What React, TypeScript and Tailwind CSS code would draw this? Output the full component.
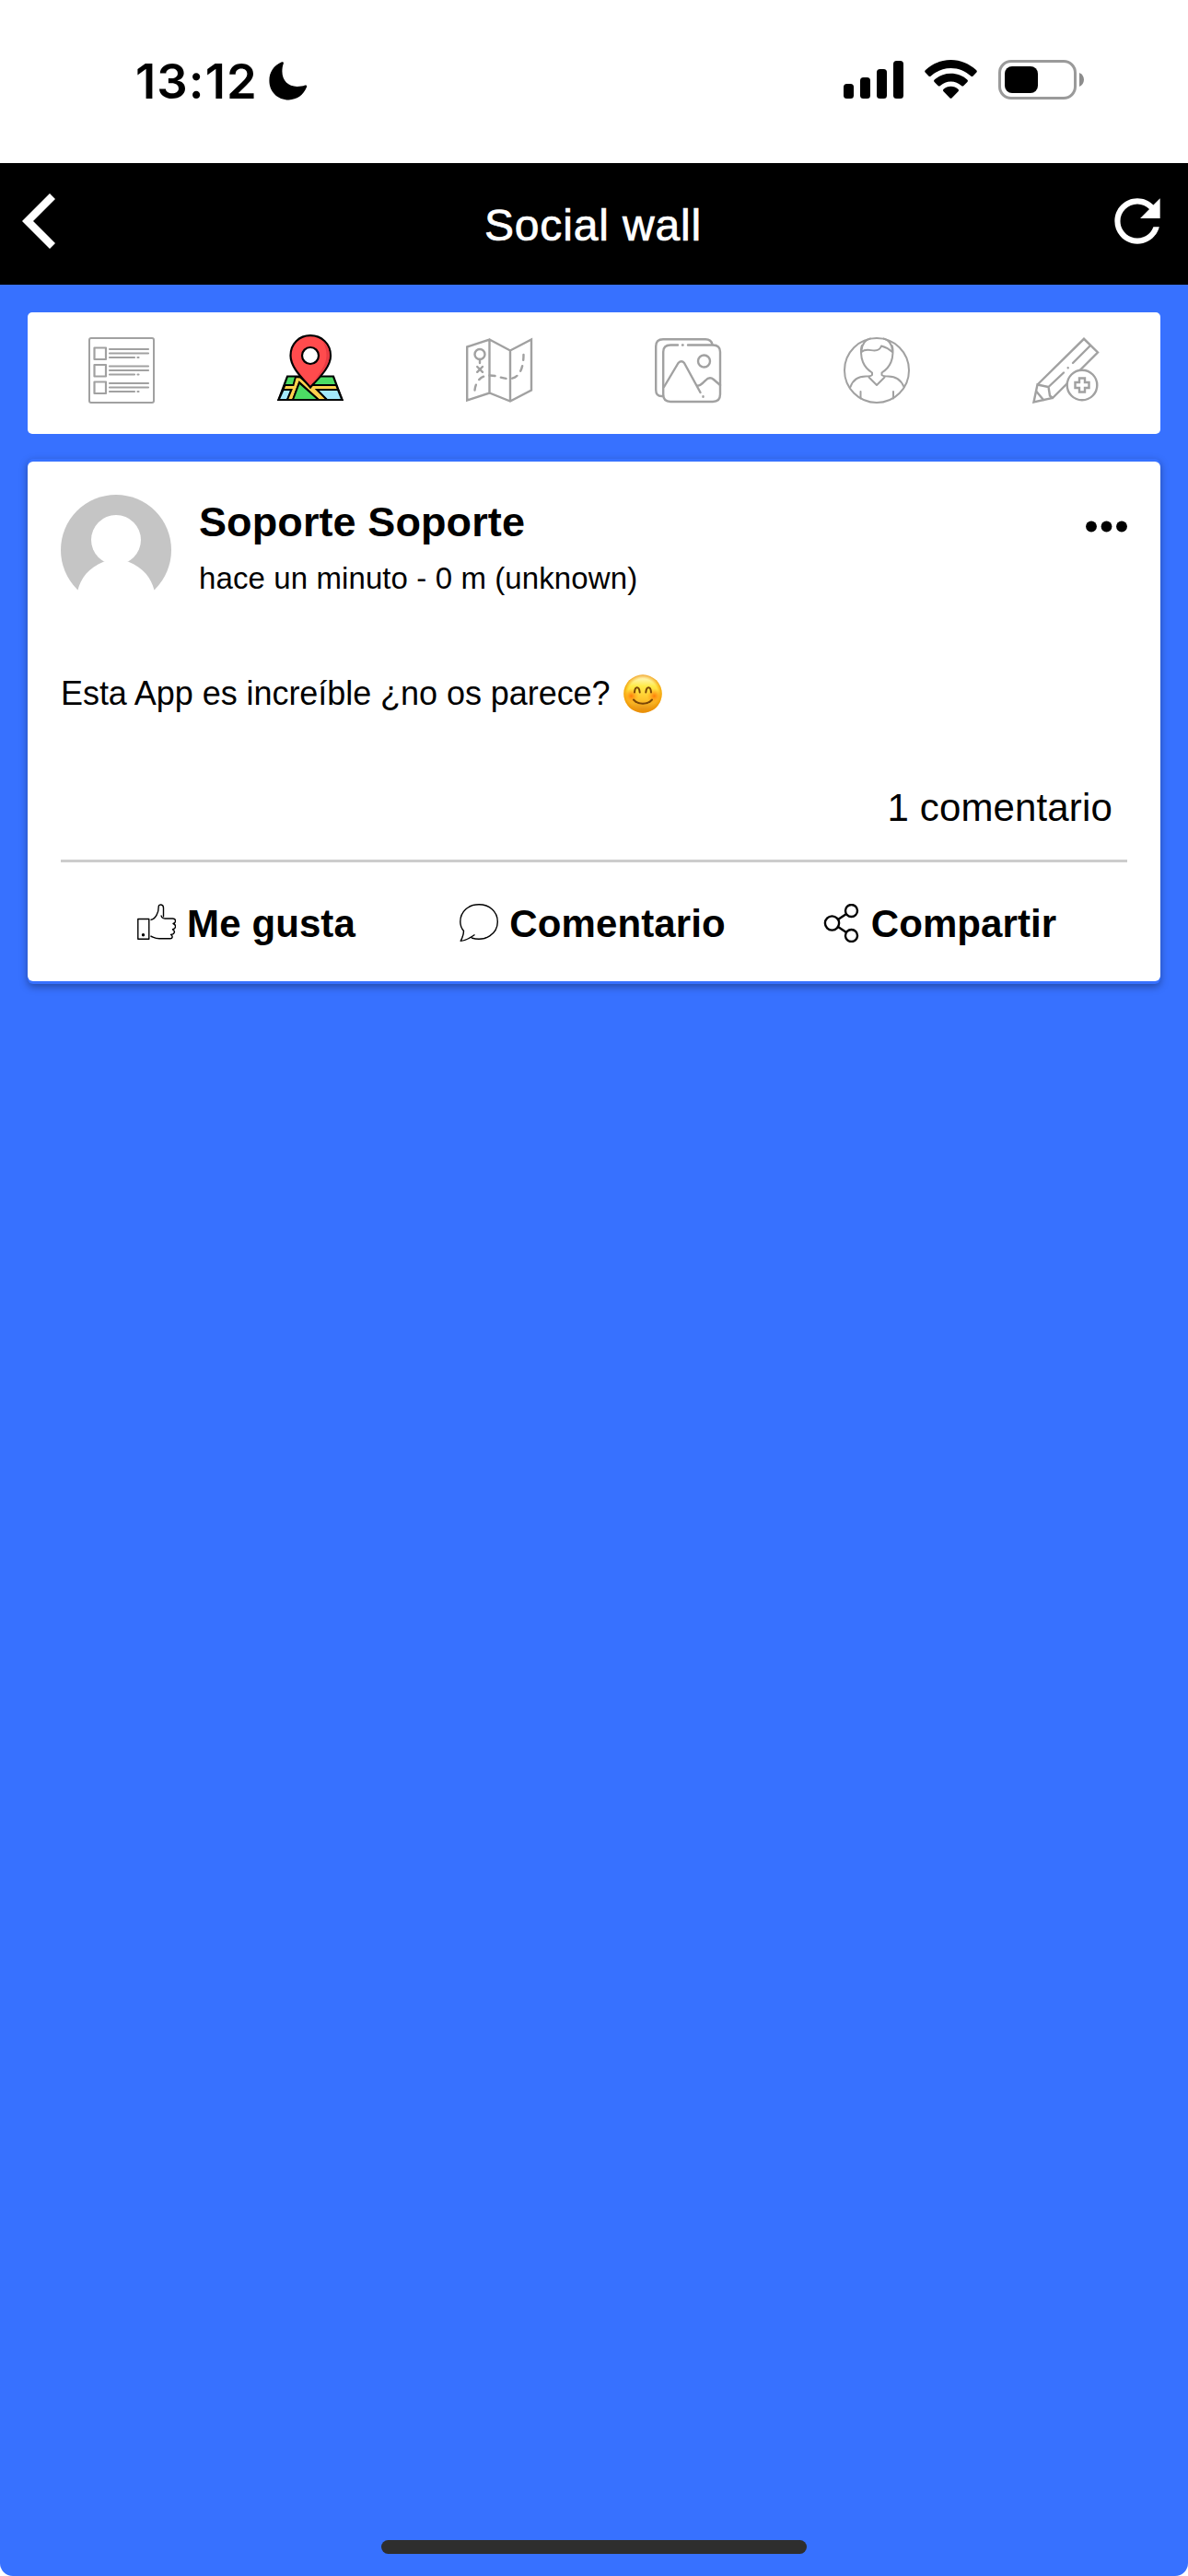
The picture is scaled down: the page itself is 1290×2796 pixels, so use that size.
import type { ReactNode } from "react";

const posts = [
  {
    author: "Soporte Soporte",
    meta: "hace un minuto - 0 m (unknown)",
    text: "Esta App es increíble ¿no os parece?",
    comments: "1 comentario",
  },
];

function StatusBar() {
  return (
    <div className="flex h-[177px] items-start justify-between bg-white pl-[147px] pr-[113px] pt-[56px]">
      <div className="flex items-center">
        <span className="w-[145px] whitespace-nowrap font-['Inter'] text-[52.5px] font-semibold leading-[64px] tracking-[1.1px]">
          13:12
        </span>
        <svg className="h-[42px] w-[42px]" viewBox="0 0 42 42">
          <path
            d="M13.5 .6C14.8 0 16.4.5 15.8 2C14.8 4.6 14.4 7.4 14.4 10.6C14.4 20.5 21 27 30.6 27C34 27 36.8 26.6 39.2 25.6C41 25 41.7 26 41 27.6C37.6 36.2 30.2 41.4 21.6 41.4C9.4 41.4 .4 32.6 .4 20.4C.4 11.4 5.6 3.8 13.5 .6Z"
            fill="#000"
          />
        </svg>
      </div>
      <div className="flex pt-[9px]">
        <svg className="h-[43px] w-[66px]" viewBox="0 0 66 43">
          <rect x="0" y="26" width="11" height="16" rx="3.5" />
          <rect x="18" y="19" width="11" height="23" rx="3.5" />
          <rect x="36" y="10" width="11" height="32" rx="3.5" />
          <rect x="54" y="1" width="11" height="41" rx="3.5" />
        </svg>
        <svg className="ml-[22px] h-[43px] w-[57px]" viewBox="0 0 57 43">
          <path d="M28.5 0C39 0 48.5 4.2 56 11Q57.4 12.4 56.4 13.6L52.6 17.6Q51.4 18.6 50.2 17.6C44.4 12.2 37 9 28.5 9S12.6 12.2 6.8 17.6Q5.6 18.6 4.4 17.6L.6 13.6Q-.4 12.4 1 11C8.5 4.2 18 0 28.5 0Z" />
          <path d="M28.5 14.8C35.2 14.8 41.5 17.2 46.3 21.5Q47.6 22.8 46.4 24.1L42.4 28Q41.2 29 40 28C37 25.3 32.9 23.5 28.5 23.5S20 25.3 17 28Q15.8 29 14.6 28L10.6 24.1Q9.4 22.8 10.7 21.5C15.5 17.2 21.8 14.8 28.5 14.8Z" />
          <path d="M28.5 28.8C31.5 28.8 34.3 29.9 36.4 31.7Q37.8 33 36.5 34.3L29.7 41.2Q28.5 42.4 27.3 41.2L20.5 34.3Q19.2 33 20.6 31.7C22.7 29.9 25.5 28.8 28.5 28.8Z" />
        </svg>
        <svg className="ml-[23px] h-[43px] w-[93px]" viewBox="0 0 93 43">
          <rect x="1.5" y="1.5" width="82" height="40" rx="12.5" fill="none" stroke="#9a9a9a" strokeWidth="3" />
          <rect x="7" y="7" width="36" height="29" rx="8" />
          <path d="M88 14C91.2 15.4 93 18.2 93 21.5S91.2 27.6 88 29Z" fill="#8c8c8c" />
        </svg>
      </div>
    </div>
  );
}

function Header() {
  return (
    <header className="flex h-[132px] items-center justify-between bg-black text-white">
      <button className="flex w-[120px] pb-[6px] pl-[24px]">
        <svg className="h-[60px] w-[36px]" viewBox="0 0 36 60">
          <path d="M33 3L6 30L33 57" fill="none" stroke="#fff" strokeWidth="8.5" />
        </svg>
      </button>
      <h1 className="pr-[2px] pt-[4px] text-[48px] leading-[60px] tracking-[0.85px] [-webkit-text-stroke:0.7px_#fff]">
        Social wall
      </h1>
      <button className="flex w-[120px] justify-end pb-[6px] pr-[18px]">
        <svg className="h-[74px] w-[74px]" viewBox="0 0 24 24" fill="#fff">
          <path d="M17.65 6.35C16.2 4.9 14.21 4 12 4c-4.42 0-7.99 3.58-7.99 8s3.57 8 7.99 8c3.73 0 6.84-2.55 7.73-6h-2.08c-.82 2.33-3.04 4-5.65 4-3.31 0-6-2.69-6-6s2.69-6 6-6c1.66 0 3.14.69 4.22 1.78L13 11h7V4l-2.35 2.35z" />
        </svg>
      </button>
    </header>
  );
}

function TabIcon({ children }: { children: ReactNode }) {
  return (
    <button className="flex flex-1 justify-center pr-[2px] pt-[27px]">
      <svg
        className="h-[72px] w-[72px] overflow-visible"
        viewBox="0 0 72 72"
        fill="none"
        stroke="#a1a1a1"
        strokeWidth="2.4"
        strokeLinecap="round"
        strokeLinejoin="round"
      >
        {children}
      </svg>
    </button>
  );
}

function Toolbar() {
  return (
    <nav className="flex h-[132px] rounded-[5px] bg-white">
      <TabIcon>
        <rect x="1" y="1" width="70" height="70" rx="2" strokeWidth="2" />
        {[0, 18.5, 37].map((y) => (
          <g key={y} strokeWidth="2.2">
            <rect x="6.5" y={11.5 + y} width="12.5" height="12.5" />
            <path d={`M23 ${13 + y}H65M23 ${17.5 + y}H65M23 ${22 + y}H50M53.5 ${22 + y}H54.5`} />
          </g>
        ))}
      </TabIcon>

      <TabIcon>
        <g transform="translate(0 -3)" stroke="#000" strokeWidth="2.2" strokeLinejoin="miter">
          <path d="M11 45.5H61L70.5 71H1.5Z" fill="#4cdc64" />
          <path d="M6.5 60H15.5L11 71H1.5Z" fill="#a4e9fc" />
          <path d="M43 60H66L70.5 71H54Z" fill="#a4e9fc" />
          <path
            d="M20 46L25 46.5L36 56L38 55H64L66 60H43L54 71H45L24 52L17 71H11L15.5 60H6.5L8.5 55H17.5Z"
            fill="#ffd24d"
            strokeWidth="1.9"
          />
          <path d="M24 52.5L17 71H45Z" fill="#4cdc64" strokeWidth="1.9" />
          <path
            d="M36 57.5C28 48 14.5 36 14.5 23C14.5 10 24 1.2 36 1.2S58 10 58 23C58 36 44 48 36 57.5Z"
            fill="#ff4b4d"
          />
          <path
            d="M48 6C53.5 9.5 56.8 15.5 56.8 23C56.8 34 46.5 44.5 38.5 53.5C44 44 53.5 34 53.5 23C53.5 16 51.5 10 48 6Z"
            fill="#e93b43"
            stroke="none"
          />
          <circle cx="36" cy="23" r="9" fill="#fff" />
        </g>
      </TabIcon>

      <TabIcon>
        <path
          d="M1.2 10.5L25.5 2.5L48 14.5L71 2.5V57.5L48 69.5L25.5 60.5L1.2 68.5ZM25.5 2.5V60.5M48 14.5V69.5"
          strokeLinejoin="miter"
        />
        <circle cx="15" cy="18.5" r="5.5" />
        <path d="M15 24V28M12.2 32L18 37.8M18 32L12.2 37.8" />
        <path
          d="M9.5 57.5C10.5 49 15 41.5 26 41.5C35 41.5 39 45.5 48 45C57 44.5 62.5 35 62.5 19"
          strokeDasharray="6 6.5"
        />
      </TabIcon>

      <TabIcon>
        <path d="M9 64H7.5Q1.2 64 1.2 57V10Q1.2 2.2 9 2.2H55Q61.5 2.2 62.5 8" />
        <path d="M25 8.5H17Q9.2 8.5 9.2 16V62Q9.2 70 17 70H63Q71 70 71 62V16Q71 8.5 63 8.5H36M30 8.5H30.6" />
        <circle cx="53.5" cy="26" r="6.5" />
        <path d="M10 54L25.5 28Q29 24.5 32 28L49.5 60M52.5 64.3V64.8M47 52.5C50 52.5 52 49.5 55 47Q59.5 42 64 46L71 52" />
      </TabIcon>

      <TabIcon>
        <g strokeWidth="2">
          <circle cx="36" cy="36" r="35" />
          <path d="M20 9C18.5 12 18.5 21 21 27C23.5 33 27 36 31 38.5V41C30 42.5 27 42.5 24 42.5C15 42.5 10 46.5 7.5 54M52.5 9C54 12 54 21 51.5 27C49 33 45.5 36 41.5 38.5V41C42.5 42.5 45.5 42.5 48.5 42.5C57.5 42.5 62.5 46.5 65.5 54" />
          <path d="M27.5 43.5L36 52L44.5 43.5M18.5 59V66.5M54 59V66.5" />
          <path d="M19.5 16C24 12 29 14.5 33.5 14.5C37.5 14.5 40 12.5 41 9.5C45 10.5 49 12.5 53 16M19.5 14C20.5 7 24 2.5 29 1.5M53 14C52 7 48.5 2.5 43.5 1.5" />
        </g>
      </TabIcon>

      <TabIcon>
        <g strokeLinejoin="miter">
          <path d="M5.5 51.5L56 1.8L71 16.5L52 35.5M37.5 50.5L22 66L1.5 70.5L5.5 51.5L17.5 54L19 63.5L22 66M62.5 9.5L44 28M34 38.5L17.5 54" />
          <path d="M38.7 33.2V33.3M4.5 59L12 68" />
          <circle cx="54" cy="52" r="16.3" />
          <path d="M51 44.5H57V49H61.5V55H57V59.5H51V55H46.5V49H51Z" />
        </g>
      </TabIcon>
    </nav>
  );
}

function Avatar() {
  return (
    <svg className="h-[120px] w-[120px]" viewBox="0 0 120 120">
      <circle cx="60" cy="60" r="60" fill="#c5c5c5" />
      <circle cx="60" cy="49" r="27" fill="#fff" />
      <path d="M47 72.4C30 79 21.5 91 18.5 103.5L10 121H110L101.5 103.5C98.5 91 90 79 73 72.4Z" fill="#fff" />
    </svg>
  );
}

function SmileEmoji() {
  return (
    <svg className="h-[42px] w-[42px]" viewBox="0 0 42 42" role="img" aria-label="😊">
      <defs>
        <linearGradient id="face" x1="0" y1="0" x2="0" y2="1">
          <stop offset="0" stopColor="#fffbe0" />
          <stop offset="0.3" stopColor="#ffea48" />
          <stop offset="0.65" stopColor="#ffc52c" />
          <stop offset="1" stopColor="#df830e" />
        </linearGradient>
        <radialGradient id="rim">
          <stop offset="0.78" stopColor="#f7a000" stopOpacity="0" />
          <stop offset="1" stopColor="#ee9200" stopOpacity="0.8" />
        </radialGradient>
        <radialGradient id="blush">
          <stop offset="0" stopColor="#ff7a08" stopOpacity="0.95" />
          <stop offset="1" stopColor="#ff9a10" stopOpacity="0" />
        </radialGradient>
      </defs>
      <circle cx="21" cy="21" r="20.7" fill="url(#face)" />
      <circle cx="21" cy="21" r="20.7" fill="url(#rim)" />
      <circle cx="8.5" cy="23.5" r="8" fill="url(#blush)" />
      <circle cx="33.5" cy="23.5" r="8" fill="url(#blush)" />
      <g fill="none" stroke="#7a4606" strokeWidth="2" strokeLinecap="round">
        <path d="M12 19.5C12.5 12.5 17 12.5 17.7 19.5M24.3 19.5C25 12.5 29.5 12.5 30 19.5" />
        <path d="M11 27.5C16 33.3 26 33.3 31 27.5" />
      </g>
    </svg>
  );
}

function Action({ label, children }: { label: string; children: ReactNode }) {
  return (
    <button className="flex flex-1 items-center justify-center gap-[12px] pr-[3px] text-[42px] font-bold leading-[48px] tracking-[0.1px]">
      <svg
        className="h-[42px] w-[42px]"
        viewBox="0 0 42 42"
        fill="none"
        stroke="#000"
        strokeWidth="1.4"
        strokeLinejoin="round"
      >
        {children}
      </svg>
      <span className="pt-[2px]">{label}</span>
    </button>
  );
}

function Post({ post }: { post: (typeof posts)[number] }) {
  return (
    <article className="-mt-[3px] rounded-[6px] border-y-[3px] border-[#3771ff] bg-[#3771ff] shadow-[0_3px_9px_rgba(0,0,0,0.35)]">
      <div className="h-[564px] rounded-[6px] bg-white px-[36px] pt-[36px]">
        <div className="flex h-[120px]">
          <Avatar />
          <div className="ml-[30px] flex-1 pt-[4px]">
            <h2 className="text-[45px] font-bold leading-[52px] tracking-[0.1px]">{post.author}</h2>
            <p className="pt-[16px] text-[33px] leading-[38px] tracking-[0.1px]">{post.meta}</p>
          </div>
          <svg className="mt-[28px] h-[13px] w-[45px]" viewBox="0 0 45 13">
            <circle cx="6" cy="6.5" r="5.9" />
            <circle cx="22.5" cy="6.5" r="5.9" />
            <circle cx="39" cy="6.5" r="5.9" />
          </svg>
        </div>

        <p className="flex items-center pt-[74px] text-[36px] leading-[42px] tracking-[-0.05px]">
          <span className="w-[611px] whitespace-nowrap pt-[1px]">{post.text}</span>
          <SmileEmoji />
        </p>

        <p className="pr-[16px] pt-[79px] text-right text-[42px] leading-[48px] tracking-[0.15px]">
          {post.comments}
        </p>

        <div className="mt-[32px] h-[3px] bg-[#ccc]" />

        <div className="flex px-[15px] pt-[41px]">
          <Action label="Me gusta">
            <path d="M.8 16.5H12.8V38.3H.8ZM14.5 17.5C20 16.5 23.3 10 23.3 2.5C23.3 .5 28.5 0 28.5 4.5V14.5M26 12.5Q26.5 16 30 16H38.5C42.5 16 42.5 20.5 39 21.5C42.5 22.5 42.5 27 38.5 27.8C41.5 29.5 41 33 36.5 33.5C39 35 38.5 37.8 36 37.8H24C19 37.8 17.5 36 14.5 35" />
            <circle cx="6.5" cy="33.8" r="1" fill="#000" />
          </Action>
          <Action label="Comentario">
            <path d="M13 37C28 41.5 41.3 32.5 41.3 19.5C41.3 8.5 32.5 .8 21 .8S.8 8.5 .8 19.5C.8 23.5 2 26.5 4.5 29.5C4.5 33.5 3 37 1.2 40.3C6.500 40 11.5 37 16.5 33.5" />
          </Action>
          <Action label="Compartir">
            <g strokeWidth="2.4">
              <circle cx="11.5" cy="21" r="7.6" />
              <circle cx="32.5" cy="7.5" r="6.5" />
              <circle cx="32.5" cy="34.5" r="6.5" />
              <path d="M18 17L27 11M18 25L27 31" />
            </g>
          </Action>
        </div>
      </div>
    </article>
  );
}

export default function App() {
  return (
    <div className="h-[2796px] w-[1290px] bg-white font-['Liberation_Sans',sans-serif] text-black">
      <div className="flex h-full flex-col overflow-hidden rounded-b-[14px] bg-[#3771ff]">
        <StatusBar />
        <Header />
        <main className="flex flex-1 flex-col gap-[30px] p-[30px]">
          <Toolbar />
          {posts.map((post) => (
            <Post key={post.author} post={post} />
          ))}
        </main>
        <div className="mx-auto mb-[24px] h-[15px] w-[462px] rounded-full bg-[#2e2e2e]" />
      </div>
    </div>
  );
}
